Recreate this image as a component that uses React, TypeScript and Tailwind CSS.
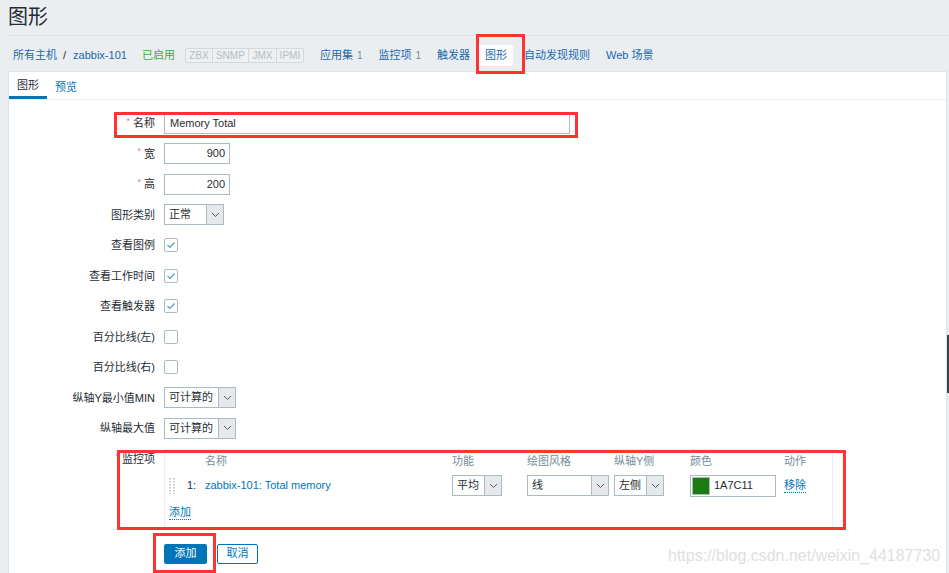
import React from "react";

const font = `font-["Liberation_Sans","Noto_Sans_CJK_SC",sans-serif]`;

const Chevron = () => (
  <svg width="9" height="6" viewBox="0 0 9 6">
    <path d="M1 1l3.5 3.5L8 1" fill="none" stroke="#5a5a5a" strokeWidth="1" />
  </svg>
);

type SelectProps = { value: string; box: string };

const SelectBox = ({ value, box }: SelectProps) => (
  <div className={`flex h-[21px] border border-[#acbbc2] bg-white ${box}`}>
    <span className="flex-1 pl-[4px] leading-[19px] text-[#1f2c33]">{value}</span>
    <span className="flex w-[17px] items-center justify-center border-l border-[#acbbc2] bg-[#e6e9eb]">
      <Chevron />
    </span>
  </div>
);

const Check = ({ on }: { on: boolean }) => (
  <div className="flex h-[14px] w-[14px] items-center justify-center rounded-[2px] border border-[#acbbc2] bg-white">
    {on && (
      <svg width="10" height="8" viewBox="0 0 10 8">
        <polyline points="1.5,4 4,6.5 8.5,1.5" fill="none" stroke="#4c9bd3" strokeWidth="1.2" />
      </svg>
    )}
  </div>
);

const Label = ({ text, req }: { text: string; req?: boolean }) => (
  <div className="flex h-[30.5px] w-[146px] shrink-0 items-center justify-end text-[#1f2c33]">
    {req && <span className="relative -top-[2px] mr-[3px] text-[9px] text-[#e87a8a]">*</span>}
    {text}
  </div>
);

const Row = ({ label, req, children }: { label: string; req?: boolean; children: React.ReactNode }) => (
  <div className="flex h-[30.5px] items-center">
    <Label text={label} req={req} />
    <div className="ml-[9px] flex items-center">{children}</div>
  </div>
);

const Handle = () => (
  <svg width="6" height="16" viewBox="0 0 6 16">
    {[0, 3, 6, 9, 12, 15].map((y) => (
      <g key={y} fill="#c9d1d6">
        <rect x="0" y={y} width="2" height="1.6" />
        <rect x="4" y={y} width="2" height="1.6" />
      </g>
    ))}
  </svg>
);

export default function App() {
  return (
    <div className={`relative h-[573px] w-[949px] overflow-hidden bg-[#ebeef1] text-[11px] ${font}`}>
      {/* header */}
      <div className="ml-[8px] h-[36px] border-b border-[#dfe4e7]">
        <h1 className="pt-[5px] text-[20px] leading-[24px] text-[#1f2c33]">图形</h1>
      </div>

      {/* host nav */}
      <div className="flex h-[35px] items-center pl-[13px] pt-[3px] text-[#1a68ae]">
        <span>所有主机</span>
        <span className="ml-[6px] text-[#1f2c33]">/</span>
        <span className="ml-[7px]">zabbix-101</span>
        <span className="ml-[15px] text-[#45a84a]">已启用</span>
        <div className="ml-[10px] flex h-[15px] rounded-[2px] border border-[#d3d9dd] bg-[#eef0f2] text-[10px] leading-[13px] text-[#b3bfc5]">
          <span className="w-[26px] text-center">ZBX</span>
          <span className="w-[36px] border-l border-[#d3d9dd] text-center">SNMP</span>
          <span className="w-[28px] border-l border-[#d3d9dd] text-center">JMX</span>
          <span className="w-[27px] border-l border-[#d3d9dd] text-center">IPMI</span>
        </div>
        <span className="ml-[16px]">应用集</span>
        <span className="ml-[4px] text-[10px] text-[#768d99]">1</span>
        <span className="ml-[16px]">监控项</span>
        <span className="ml-[4px] text-[10px] text-[#768d99]">1</span>
        <span className="ml-[16px]">触发器</span>
        <span className="ml-[9px] flex h-[21px] items-center rounded-[2px] bg-white px-[6px]">图形</span>
        <span className="ml-[11px]">自动发现规则</span>
        <span className="ml-[16px]">Web 场景</span>
      </div>

      {/* panel */}
      <div className="ml-[8px] h-[520px] w-[939px] border border-[#dfe4e7] bg-white">
        <div className="flex h-[28px] border-b border-[#ebeef1]">
          <span className="flex h-[27px] items-center border-b-[3px] border-[#0275b8] px-[8px] pt-[3px] text-[#1f2c33]">图形</span>
          <span className="flex h-[27px] items-center px-[8px] pt-[3px] text-[#0275b8]">预览</span>
        </div>

        <div className="pt-[8px]">
          <Row label="名称" req>
            <div className="h-[21px] w-[406px] border border-[#acbbc2] pl-[5px] leading-[19px] text-[#1f2c33]">Memory Total</div>
          </Row>
          <Row label="宽" req>
            <div className="h-[21px] w-[66px] border border-[#acbbc2] pr-[4px] text-right leading-[19px] text-[#1f2c33]">900</div>
          </Row>
          <Row label="高" req>
            <div className="h-[21px] w-[66px] border border-[#acbbc2] pr-[4px] text-right leading-[19px] text-[#1f2c33]">200</div>
          </Row>
          <Row label="图形类别">
            <SelectBox value="正常" box="w-[60px]" />
          </Row>
          <Row label="查看图例">
            <Check on />
          </Row>
          <Row label="查看工作时间">
            <Check on />
          </Row>
          <Row label="查看触发器">
            <Check on />
          </Row>
          <Row label="百分比线(左)">
            <Check on={false} />
          </Row>
          <Row label="百分比线(右)">
            <Check on={false} />
          </Row>
          <Row label="纵轴Y最小值MIN">
            <SelectBox value="可计算的" box="w-[72px]" />
          </Row>
          <Row label="纵轴最大值">
            <SelectBox value="可计算的" box="w-[72px]" />
          </Row>

          {/* items */}
          <div className="flex items-start">
            <Label text="监控项" req />
            <div className="ml-[9px] mt-[5px] h-[81px] w-[669px] border border-[#ebeef1] pl-[4px]">
              <div className="flex h-[24px] items-center text-[#768d99]">
                <span className="w-[36px]" />
                <span className="w-[247px]">名称</span>
                <span className="w-[75px]">功能</span>
                <span className="w-[87px]">绘图风格</span>
                <span className="w-[76px]">纵轴Y侧</span>
                <span className="w-[94px]">颜色</span>
                <span>动作</span>
              </div>
              <div className="flex h-[24px] items-center">
                <span className="flex w-[18px]">
                  <Handle />
                </span>
                <span className="w-[18px] text-[#1f2c33]">1:</span>
                <span className="w-[247px] text-[#0275b8]">zabbix-101: Total memory</span>
                <span className="w-[75px]">
                  <SelectBox value="平均" box="w-[50px]" />
                </span>
                <span className="w-[87px]">
                  <SelectBox value="线" box="w-[82px]" />
                </span>
                <span className="w-[76px]">
                  <SelectBox value="左侧" box="w-[50px]" />
                </span>
                <span className="w-[94px]">
                  <div className="flex h-[22px] w-[86px] items-center border border-[#acbbc2] pl-[1px]">
                    <span className="h-[18px] w-[18px] border border-[#acbbc2] bg-[#1a7c11]" />
                    <span className="ml-[4px] text-[#1f2c33]">1A7C11</span>
                  </div>
                </span>
                <span className="border-b border-dotted border-[#0275b8] leading-[13px] text-[#0275b8]">移除</span>
              </div>
              <div className="mt-[3px] flex h-[24px] items-center">
                <span className="border-b border-dotted border-[#0275b8] leading-[13px] text-[#0275b8]">添加</span>
              </div>
            </div>
          </div>

          {/* buttons */}
          <div className="ml-[155px] mt-[14px] flex gap-[10px]">
            <button className="h-[20px] w-[43px] rounded-[2px] bg-[#0275b8] text-[11px] text-white">添加</button>
            <button className="h-[20px] w-[41px] rounded-[2px] border border-[#0275b8] bg-white text-[11px] text-[#0275b8]">取消</button>
          </div>
        </div>
      </div>

      {/* watermark */}
      <div className="absolute left-[668px] top-[544px] text-[16px] text-[#e0e0e0]">https://blog.csdn.net/weixin_44187730</div>

      {/* scroll indicator */}
      <div className="absolute left-[947px] top-[335px] h-[58px] w-[2px] bg-[#3d4450]" />

      {/* red annotation boxes */}
      <div className="absolute left-[476px] top-[34px] h-[40px] w-[49px] border-[3px] border-[#ff3333]" />
      <div className="absolute left-[114px] top-[112px] h-[26px] w-[464px] border-[3px] border-[#ff3333]" />
      <div className="absolute left-[117px] top-[450px] h-[80px] w-[729px] border-[3px] border-[#ff3333]" />
      <div className="absolute left-[153px] top-[533px] h-[40px] w-[63px] border-[3px] border-[#ff3333]" />
    </div>
  );
}
